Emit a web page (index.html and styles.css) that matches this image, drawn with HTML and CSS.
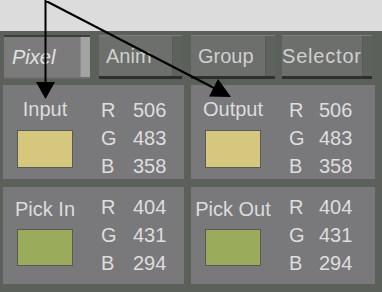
FILE: index.html
```html
<!DOCTYPE html>
<html lang="en">
<head>
	<meta charset="utf-8" />
	<title>Pixel</title>
	<link rel="stylesheet" href="styles.css">
</head>
<body>
	<div class="screen">
		<div class="topbar"></div>

		<div class="board">
			<div class="tabs">
				<div class="tab active w-pixel"><div class="tab-label">Pixel</div><div class="tab-grip"></div></div>
				<div class="tab w-anim"><div class="tab-label">Anim</div><div class="tab-grip"></div></div>
				<div class="tab w-group"><div class="tab-label">Group</div><div class="tab-grip"></div></div>
				<div class="tab w-selector"><div class="tab-label tight">Selector</div><div class="tab-grip"></div></div>
			</div>

			<div class="panes">
				<div class="pane top">
					<div class="pick">
						<div class="pick-label">Input</div>
						<div class="swatch yellow"></div>
					</div>
					<div class="rgb">
						<span>R</span><span>506</span>
						<span>G</span><span>483</span>
						<span>B</span><span>358</span>
					</div>
				</div>

				<div class="pane top">
					<div class="pick">
						<div class="pick-label">Output</div>
						<div class="swatch yellow"></div>
					</div>
					<div class="rgb narrow">
						<span>R</span><span>506</span>
						<span>G</span><span>483</span>
						<span>B</span><span>358</span>
					</div>
				</div>

				<div class="pane bottom">
					<div class="pick">
						<div class="pick-label">Pick In</div>
						<div class="swatch green"></div>
					</div>
					<div class="rgb">
						<span>R</span><span>404</span>
						<span>G</span><span>431</span>
						<span>B</span><span>294</span>
					</div>
				</div>

				<div class="pane bottom">
					<div class="pick">
						<div class="pick-label">Pick Out</div>
						<div class="swatch green"></div>
					</div>
					<div class="rgb narrow">
						<span>R</span><span>404</span>
						<span>G</span><span>431</span>
						<span>B</span><span>294</span>
					</div>
				</div>
			</div>
		</div>

		<!-- callout arrows drawn over the panel -->
		<svg class="arrows" width="382" height="292" viewBox="0 0 382 292">
			<path d="M45.5 0 L45.5 84 M46 1 L214 88" stroke="#000" stroke-width="2" fill="none" />
			<polygon points="36,82 55,82 45.5,99" fill="#000" />
			<polygon points="231,97 209,96.5 218,79" fill="#000" />
		</svg>
	</div>
</body>
</html>
```

FILE: styles.css
```css
/* global */
	html, body {margin:0;padding:0;}
	body {
		background: #5b605a;
		font-family: "Liberation Sans", Arial, sans-serif;
		font-size: 20px;
		color: #dcdcdc;
	}
	*, :after, :before {box-sizing:border-box;}
/* global end */

/* layout */
	.screen {position:relative;width:382px;height:292px;overflow:hidden;}
	.topbar {height:31px;background:#dcdcdc;}
	.board {height:261px;padding-top:4px;background:#5b605a;}

	/* tabs */
	.tabs {display:flex;gap:9px;padding-left:4px;}
	.tab {
		display: flex;
		height: 44px;
		border-top: 1px solid #7d7f7c;
		border-bottom: 3px solid #2e302d;
		background: #6c6f6b;
	}
	.tab .tab-label {
		flex: 1;
		display: flex;
		align-items: center;
		padding-left: 7px;
		color: #cfd0cf;
		white-space: nowrap;
	}
	.tab .tab-label.tight {padding-left:0;letter-spacing:0.8px;}
	.tab .tab-grip {width:10px;background:#5e625d;border-left:1px solid #575b56;}

	.tab.active {border-top:2px solid #3c3f3b;border-bottom:2px solid #6d6e6c;background:#7b7b7b;}
	.tab.active .tab-label {font-style:italic;padding-left:8px;color:#e2e2e2;}
	.tab.active .tab-grip {background:#a3a3a3;border-left:1px solid #8c8c8c;}

	.w-pixel {width:86px;}
	.w-anim {width:83px;}
	.w-group {width:84px;}
	.w-selector {width:90px;margin-left:-2px;}

	/* panes */
	.panes {
		display: grid;
		grid-template-columns: 181px 184px;
		grid-template-rows: 94px 97px;
		column-gap: 7px;
		row-gap: 8px;
		margin-top: 6px;
		padding-left: 3px;
	}
	.pane {display:flex;background:#79787b;overflow:hidden;}
	.pane.top {padding-top:13px;}
	.pane.bottom {padding-top:11px;}

	.pick {display:flex;flex-direction:column;align-items:center;width:56px;margin-left:14px;}
	.pick-label {height:23px;line-height:23px;white-space:nowrap;}
	.swatch {width:56px;border:1px solid #595a52;}
	.pane.top .swatch {height:38px;margin-top:9px;}
	.pane.bottom .swatch {height:37px;margin-top:8px;}
	.swatch.yellow {background:#d6c77e;}
	.swatch.green {background:#9aab5c;}

	.rgb {
		display: grid;
		grid-template-columns: 32px auto;
		grid-auto-rows: 28px;
		align-items: center;
		margin-left: 28px;
		color: #dedede;
	}
	.rgb.narrow {grid-template-columns:30px auto;}
	.pane.top .rgb {margin-top:-2px;}
	.pane.bottom .rgb {margin-top:-5px;}

	/* overlay */
	.arrows {position:absolute;left:0;top:0;pointer-events:none;}
/* layout end */
```
